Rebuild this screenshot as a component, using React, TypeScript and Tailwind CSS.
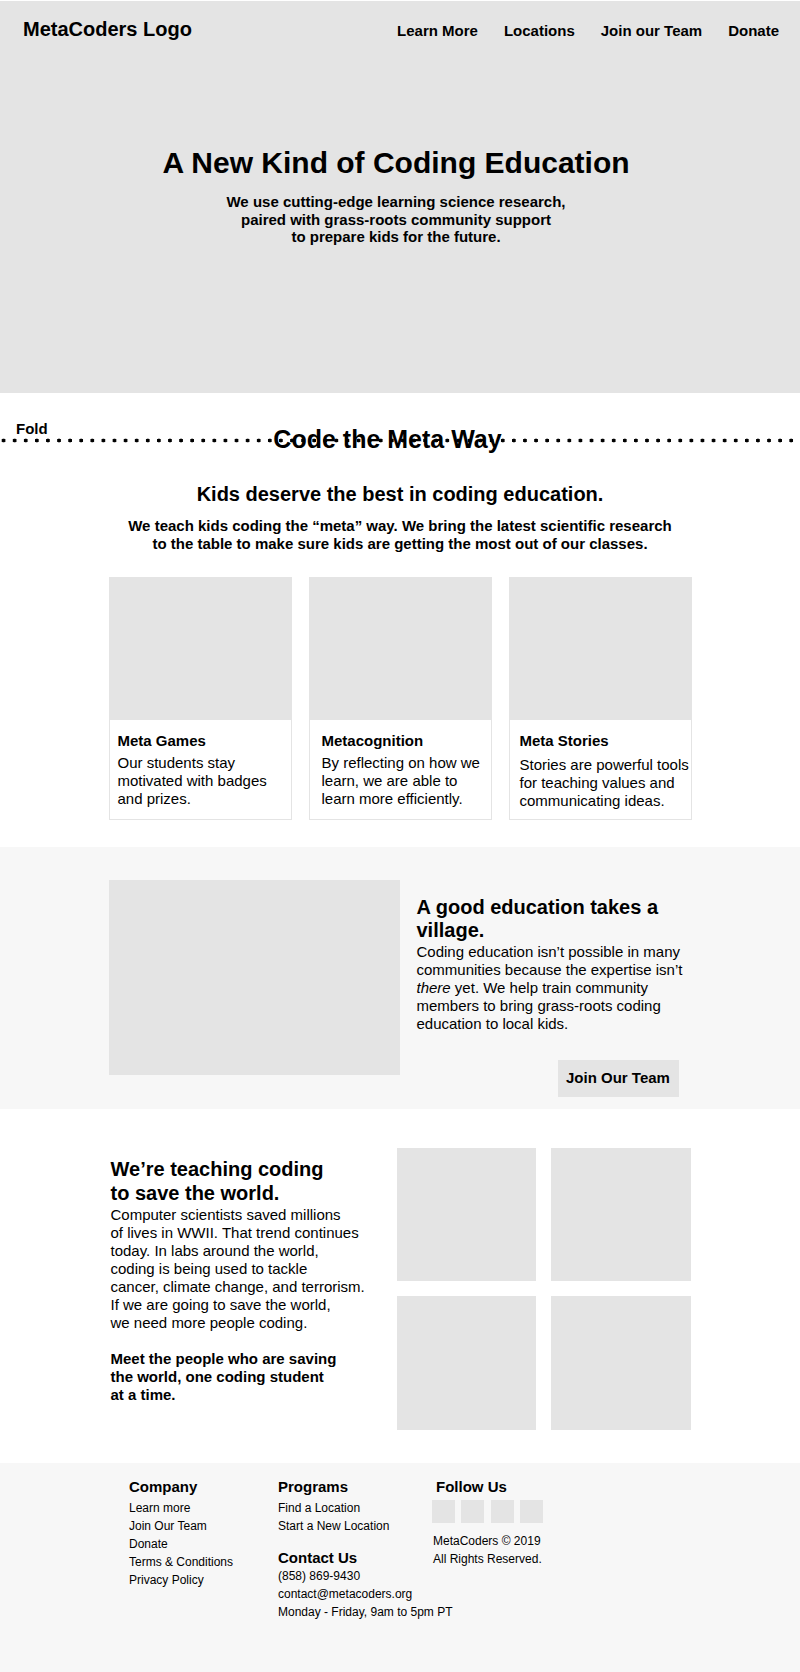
import React from "react";

const Card = ({
  title,
  lines,
  pad,
  bodyOffset,
}: {
  title: string;
  lines: string[];
  pad: string;
  bodyOffset?: string;
}) => (
  <div className="w-[183px] h-[243px] border border-[#e4e4e4] bg-white">
    <div className="h-[142px] bg-[#e4e4e4]" />
    <div className={`pt-[12px] ${pad}`}>
      <div className="text-[15px] font-bold leading-[18px]">{title}</div>
      <p className={`text-[15px] leading-[18px] ${bodyOffset ?? "mt-[4px]"}`}>
        {lines.map((l, i) => (
          <React.Fragment key={i}>
            {l}
            {i < lines.length - 1 && <br />}
          </React.Fragment>
        ))}
      </p>
    </div>
  </div>
);

export default function App() {
  return (
    <div className="w-full bg-white text-black font-['Liberation_Sans',Arial,sans-serif]">
      {/* Header / Hero */}
      <header className="h-[393px] border-t border-white bg-[#e4e4e4]">
        <div className="flex items-center justify-between pl-[23px] pr-[21px] pt-[17px]">
          <div className="text-[20px] font-bold leading-[23px]">MetaCoders Logo</div>
          <nav className="flex gap-[26px] pt-[1px] text-[15px] font-bold leading-[17px]">
            <span>Learn More</span>
            <span>Locations</span>
            <span>Join our Team</span>
            <span>Donate</span>
          </nav>
        </div>
        <div className="mt-[105px] pr-[8px] text-center">
          <h1 className="text-[30px] font-bold leading-[34px]">A New Kind of Coding Education</h1>
          <p className="mt-[13px] text-[15px] font-bold leading-[17.6px]">
            We use cutting-edge learning science research,
            <br />
            paired with grass-roots community support
            <br />
            to prepare kids for the future.
          </p>
        </div>
      </header>

      {/* Code the Meta Way */}
      <section className="relative">
        <div className="absolute left-[16px] top-[27px] text-[15px] font-bold leading-[18px]">Fold</div>
        <div className="absolute left-0 right-0 top-[45px] h-[5px] bg-[radial-gradient(circle,#000_1.7px,transparent_2.2px)] bg-[length:11.1px_5px] bg-[position:-2px_0] bg-repeat-x" />
        <h2 className="relative pr-[25px] pt-[32px] text-center text-[25px] font-bold leading-[29px]">
          Code the Meta Way
        </h2>
        <h3 className="mt-[28.5px] text-center text-[20px] font-bold leading-[23px]">
          Kids deserve the best in coding education.
        </h3>
        <p className="mt-[11.5px] text-center text-[15px] font-bold leading-[18px]">
          We teach kids coding the “meta” way. We bring the latest scientific research
          <br />
          to the table to make sure kids are getting the most out of our classes.
        </p>
        <div className="mx-auto mt-[24px] flex w-[583px] gap-[17px]">
          <Card
            title="Meta Games"
            lines={["Our students stay", "motivated with badges", "and prizes."]}
            pad="pl-[8px]"
          />
          <Card
            title="Metacognition"
            lines={["By reflecting on how we", "learn, we are able to", "learn more efficiently."]}
            pad="pl-[12px]"
          />
          <Card
            title="Meta Stories"
            lines={["Stories are powerful tools", "for teaching values and", "communicating ideas."]}
            pad="pl-[10px]"
            bodyOffset="mt-[6px]"
          />
        </div>
      </section>

      {/* Village */}
      <section className="mt-[27px] h-[262px] bg-[#f7f7f7] pt-[33px]">
        <div className="mx-auto flex w-[583px] gap-[17px]">
          <div className="h-[195px] w-[291px] bg-[#e4e4e4]" />
          <div className="flex w-[275px] flex-col pt-[15.5px]">
            <h3 className="text-[20px] font-bold leading-[23px]">
              A good education takes a
              <br />
              village.
            </h3>
            <p className="mt-[1px] text-[15px] leading-[18px]">
              Coding education isn’t possible in many
              <br />
              communities because the expertise isn’t
              <br />
              <em>there</em> yet. We help train community
              <br />
              members to bring grass-roots coding
              <br />
              education to local kids.
            </p>
            <div className="mr-[13px] mt-[27.5px] flex h-[37px] w-[121px] items-center justify-center self-end bg-[#e4e4e4] text-[15px] font-bold">
              Join Our Team
            </div>
          </div>
        </div>
      </section>

      {/* Save the world */}
      <section className="h-[354px] pt-[39px]">
        <div className="mx-auto flex w-[583px] justify-between">
          <div className="pl-[2px] pt-[9px]">
            <h3 className="text-[20px] font-bold leading-[24px]">
              We’re teaching coding
              <br />
              to save the world.
            </h3>
            <p className="mt-[1px] text-[15px] leading-[18px]">
              Computer scientists saved millions
              <br />
              of lives in WWII. That trend continues
              <br />
              today. In labs around the world,
              <br />
              coding is being used to tackle
              <br />
              cancer, climate change, and terrorism.
              <br />
              If we are going to save the world,
              <br />
              we need more people coding.
            </p>
            <p className="mt-[18px] text-[15px] font-bold leading-[18px]">
              Meet the people who are saving
              <br />
              the world, one coding student
              <br />
              at a time.
            </p>
          </div>
          <div className="mr-[1px] grid grid-cols-[139px_140px] grid-rows-[133px_134px] gap-[15px]">
            <div className="bg-[#e4e4e4]" />
            <div className="bg-[#e4e4e4]" />
            <div className="bg-[#e4e4e4]" />
            <div className="bg-[#e4e4e4]" />
          </div>
        </div>
      </section>

      {/* Footer */}
      <footer className="flex h-[209px] bg-[#f7f7f7] pl-[129px] pt-[15px]">
        <div className="w-[149px]">
          <h4 className="text-[15px] font-bold leading-[18px]">Company</h4>
          <ul className="mt-[3px] text-[12px] leading-[18px]">
            <li>Learn more</li>
            <li>Join Our Team</li>
            <li>Donate</li>
            <li>Terms &amp; Conditions</li>
            <li>Privacy Policy</li>
          </ul>
        </div>
        <div className="w-[154px]">
          <h4 className="text-[15px] font-bold leading-[18px]">Programs</h4>
          <ul className="mt-[3px] text-[12px] leading-[18px]">
            <li>Find a Location</li>
            <li>Start a New Location</li>
          </ul>
          <h4 className="mt-[14px] text-[15px] font-bold leading-[18px]">Contact Us</h4>
          <ul className="whitespace-nowrap text-[12px] leading-[18px]">
            <li>(858) 869-9430</li>
            <li>contact@metacoders.org</li>
            <li>Monday - Friday, 9am to 5pm PT</li>
          </ul>
        </div>
        <div>
          <h4 className="pl-[4px] text-[15px] font-bold leading-[18px]">Follow Us</h4>
          <div className="mt-[4px] flex gap-[6.33px]">
            <div className="h-[23px] w-[23px] bg-[#e4e4e4]" />
            <div className="h-[23px] w-[23px] bg-[#e4e4e4]" />
            <div className="h-[23px] w-[23px] bg-[#e4e4e4]" />
            <div className="h-[23px] w-[23px] bg-[#e4e4e4]" />
          </div>
          <p className="mt-[9px] pl-[1px] text-[12px] leading-[18px]">
            MetaCoders © 2019
            <br />
            All Rights Reserved.
          </p>
        </div>
      </footer>
    </div>
  );
}
